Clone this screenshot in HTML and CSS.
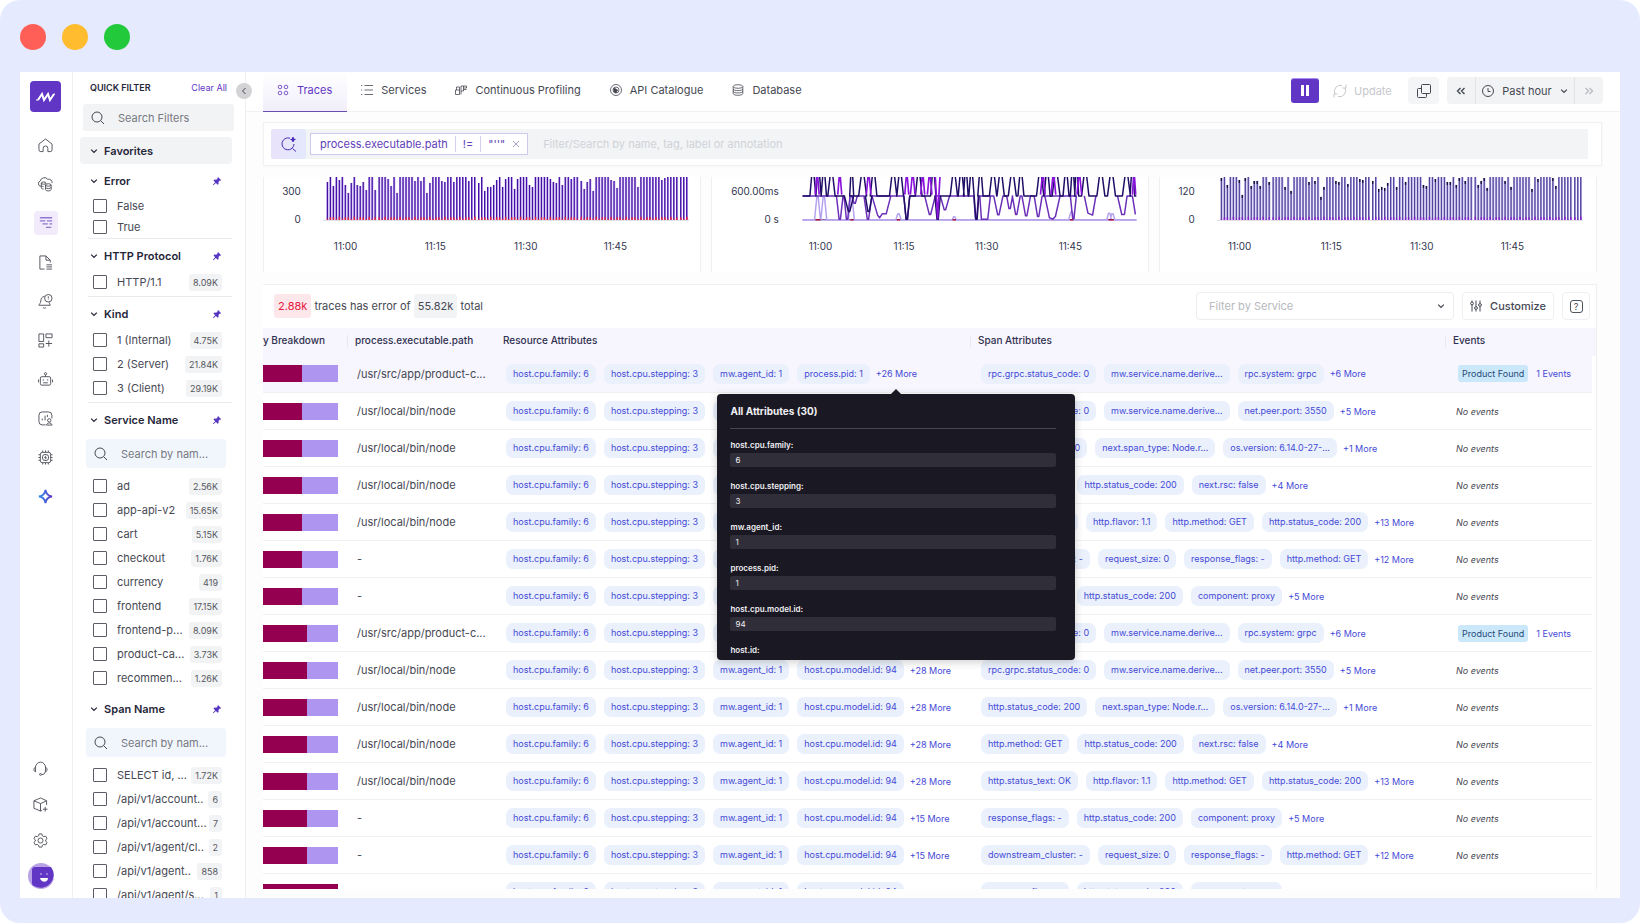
FILE: index.html
```html
<!DOCTYPE html>
<html lang="en">
<head>
    <meta charset="UTF-8">
    <meta name="viewport" content="width=device-width, initial-scale=1.0">
    <title>Traces</title>
    <link rel="stylesheet" href="styles.css">
</head>
<body>
    <!-- Shared icons -->
    <svg class="sprite" aria-hidden="true">
        <symbol id="i-chevron" viewBox="0 0 8 8"><path d="M1.200 2.600L4 5.400l2.800-2.800"/></symbol>
        <symbol id="i-search" viewBox="0 0 14 14"><circle cx="6" cy="6" r="5"/><path d="M9.600 9.600L13 13"/></symbol>
        <symbol id="i-pin" viewBox="0 0 10 10"><path d="M6 1l3.200 3.200-.9.500-.500-.1-1.300 1.500.1 1.900-.9.700L3.900 6.900 1.400 9.200l-.5-.4 2.300-2.600L1.500 4.400l.8-.8 1.900.1 1.500-1.400-.1-.700z"/></symbol>
    </svg>

    <div class="window">
        <div class="window-bar">
            <span class="dot red"></span>
            <span class="dot yellow"></span>
            <span class="dot green"></span>
        </div>

        <div class="app">
            <!-- Icon rail -->
            <nav class="rail">
                <a class="logo" href="#" aria-label="Home page">
                    <svg viewBox="0 0 31 31"><path d="M8 19l4-6 2 6 4-6 2 6 4-6"/><path class="thin" d="M6 19h2M24 13h1"/></svg>
                </a>
                <a href="#" aria-label="Home"><svg viewBox="0 0 16 16"><path d="M5.500 14.500H3a2 2 0 0 1-2-2V6.500L8 1l7 5.500v6a2 2 0 0 1-2 2h-2.500v-3.500a2.500 2.500 0 0 0-5 0z"/></svg></a>
                <a href="#" aria-label="Infrastructure"><svg viewBox="0 0 16 16"><path d="M3 10a3 3 0 0 1-.5-5.800A4.500 4.500 0 0 1 10.500 2.500 3.500 3.500 0 0 1 15 6.500"/><ellipse cx="6" cy="6.500" rx="2.500" ry="1.200"/><path d="M3.500 6.500v5c0 .8 1 1.300 2.500 1.300M3.500 9c0 .7 1 1.200 2.500 1.200"/><ellipse cx="11" cy="8.500" rx="3" ry="1.300"/><path d="M8 8.500v5c0 1.800 6 1.800 6 0v-5M8 11c0 1.800 6 1.800 6 0"/></svg></a>
                <a href="#" class="active" aria-label="Traces"><svg viewBox="0 0 16 16"><path d="M1 2h14M1 5.500h6M9 5.500h6M4 9h6M12 9h3M8 13h6"/></svg></a>
                <a href="#" aria-label="Logs"><svg viewBox="0 0 16 16"><path d="M7 15H2V1h6.500L13 5.500V8M8.500 1v4.500H13M9 10.500h6M9 12.700h6M9 15h6"/></svg></a>
                <a href="#" aria-label="Alerts"><svg viewBox="0 0 16 16"><path d="M7 2.500C4 3 3 5 3 7.500c0 2.500-2 3-2 4.500h12c0-1.500-1-2-1.300-3.200M5.500 14.500c1 .8 2 .8 3 0"/><circle cx="11" cy="4.500" r="4"/><path d="M11 2.500v2.300M11 6v.5"/></svg></a>
                <a href="#" aria-label="Dashboards"><svg viewBox="0 0 16 16"><path d="M1 1h5v8H1zM8.500 1H15v4H8.500zM1 11.500h5V15H1zM11.500 8v6.500M8.200 11.200H15"/></svg></a>
                <a href="#" aria-label="Assistant"><svg viewBox="0 0 16 16"><rect x="2.500" y="5" width="11" height="9" rx="1.500"/><path d="M8 5V3M.5 8v3M15.500 8v3M5 8.500h1.500M9.500 8.500H11M5.500 11.500h5"/><circle cx="8" cy="1.800" r="1.200"/></svg></a>
                <a href="#" aria-label="Users"><svg viewBox="0 0 16 16"><path d="M8 14.800H4.500A3.500 3.500 0 0 1 1 11.300V4.500A3.500 3.500 0 0 1 4.500 1h6.800A3.500 3.500 0 0 1 14.800 4.500V8M4.500 8v2M7.500 5v5M10 4v2.500"/><circle cx="12" cy="10" r="1.800"/><path d="M9 15c.5-3 5.500-3 6 0z"/></svg></a>
                <a href="#" aria-label="Compute"><svg viewBox="0 0 16 16"><rect x="2.500" y="2.500" width="11" height="11" rx="2"/><rect x="4.800" y="4.800" width="6.400" height="6.400" rx="2.500"/><path d="M8.500 6L7 8.200h2L7.600 10M5 .5v2M8 .5v2M11 .5v2M5 13.500v2M8 13.500v2M11 13.500v2M.5 5h2M.5 8h2M.5 11h2M13.500 5h2M13.500 8h2M13.500 11h2"/></svg></a>
                <a href="#" class="spark" aria-label="AI"><svg viewBox="0 0 16 16"><defs><linearGradient id="sparkFill" x1="0" x2="1"><stop offset="0" stop-color="#2f8df0"/><stop offset="1" stop-color="#6236c4"/></linearGradient></defs><path stroke="url(#sparkFill)" d="M8 1c.6 4.500 2.500 6.400 7 7-4.500.6-6.400 2.500-7 7-.6-4.500-2.500-6.400-7-7 4.500-.6 6.400-2.500 7-7z"/></svg></a>
                <div class="rail-bottom">
                    <a href="#" aria-label="Support"><svg viewBox="0 0 16 16"><path d="M2.500 7.500a5.500 6.300 0 0 1 11 0M2.500 7C.5 7 .5 11.500 2.800 11.500zM13.500 7c2 0 2 4.500-.3 4.500zM13 11.500c0 2-1.500 3-4 3"/><circle cx="8" cy="14.300" r="1"/></svg></a>
                    <a href="#" aria-label="Install"><svg viewBox="0 0 16 16"><path d="M14.500 8.500V4L8 1 1 4v8l7 3 1.500-.7M1 4l7 3 6.500-3M8 7v8M13 10.500v5M10.500 13h5"/></svg></a>
                    <a href="#" aria-label="Settings"><svg viewBox="0 0 16 16"><circle cx="8" cy="8" r="2.700"/><path d="M6.500 1h3l.5 2 1.500.9 2-.6L15 6l-1.500 1.300v1.400L15 10l-1.500 2.700-2-.6L10 13l-.5 2h-3L6 13l-1.500-.9-2 .6L1 10l1.500-1.300V7.300L1 6l1.500-2.700 2 .6L6 3z"/></svg></a>
                    <a class="avatar" href="#" aria-label="Account"><svg viewBox="0 0 26 26"><circle cx="13" cy="13" r="13" fill="#b9a2e6" stroke="none"/><path d="M4 7a3 3 0 0 1 3-3h16a13 13 0 0 1-17 19 3 3 0 0 1-2-3z" fill="#6236c4" stroke="none"/><path d="M12 11h2M18 11h2" stroke="#cbb9f3"/><path d="M12 15h8c0 5-7 5-8 0z" fill="#fff" stroke="none"/></svg></a>
                </div>
            </nav>

            <!-- Quick filters -->
            <aside class="filters">
                <button class="collapse" type="button" aria-label="Collapse filters"><svg viewBox="0 0 8 8"><path d="M5.500 1l-3 3 3 3"/></svg></button>
                <div class="filters-head">
                    <h2>QUICK FILTER</h2>
                    <a href="#">Clear All</a>
                </div>
                <label class="search-main">
                    <svg class="icon-search"><use href="#i-search"/></svg>
                    <input type="text" placeholder="Search Filters" aria-label="Search Filters">
                </label>
                <h3 class="favorites"><svg class="chevron"><use href="#i-chevron"/></svg>Favorites</h3>
                <div id="filter-groups"></div>
            </aside>

            <main class="main">
                <header class="topbar">
                    <nav class="tabs">
                        <a class="tab active" href="#"><svg viewBox="0 0 12 12"><circle cx="3" cy="3" r="1.800"/><circle cx="9" cy="3" r="1.800"/><circle cx="3" cy="9" r="1.800"/><circle cx="9" cy="9" r="1.800"/></svg>Traces</a>
                        <a class="tab" href="#"><svg viewBox="0 0 12 12"><path d="M3.500 1.500H12M3.500 6H12M3.500 10.500H12M0 1.500h1.200M0 6h1.200M0 10.500h1.200"/></svg>Services</a>
                        <a class="tab" href="#"><svg viewBox="0 0 12 12"><path d="M.5 6h4v4.500h-4zM1.500 6V3h3v3M6 10.500V2h2.500v5H6M8.500 2h3v2h-3M8.500 5.500h3"/></svg>Continuous Profiling</a>
                        <a class="tab" href="#"><svg viewBox="0 0 12 12"><circle cx="6" cy="6" r="5.500"/><circle cx="6" cy="6" r="3"/><path d="M4 4l3.500 2-1.500 3C4 8.500 3.500 6 4 4z" fill="#3d3f49"/></svg>API Catalogue</a>
                        <a class="tab" href="#"><svg viewBox="0 0 12 12"><ellipse cx="6" cy="2.500" rx="4.800" ry="1.800"/><path d="M1.200 2.500v7c0 2.400 9.600 2.400 9.600 0v-7M1.200 5c0 2.200 9.600 2.200 9.600 0M1.200 7.300c0 2.200 9.600 2.200 9.600 0"/></svg>Database</a>
                    </nav>
                    <div class="actions">
                        <button class="pause" type="button" aria-label="Pause"></button>
                        <button class="update" type="button" disabled><svg viewBox="0 0 14 14"><path d="M2 10A6 6 0 0 1 9 1.500M12 4a6 6 0 0 1-7 8.500M9.500 4H13V.5M4.500 10H1v3.500"/></svg>Update</button>
                        <button class="copy" type="button" aria-label="Duplicate"><svg viewBox="0 0 14 14"><rect x="4.500" y=".5" width="9" height="9" rx="1"/><path d="M4 4.500H1.500a1 1 0 0 0-1 1v7a1 1 0 0 0 1 1h7a1 1 0 0 0 1-1V10"/></svg></button>
                        <div class="time">
                            <button type="button" aria-label="Back"><svg class="arrows" viewBox="0 0 10 8"><path d="M4.500 1l-3 3 3 3M8.500 1l-3 3 3 3"/></svg></button>
                            <button class="range" type="button"><svg class="clock" viewBox="0 0 12 12"><circle cx="6" cy="6" r="5.500"/><path d="M6 3v3.500h2.500"/></svg>Past hour<svg class="chevron"><use href="#i-chevron"/></svg></button>
                            <button type="button" aria-label="Forward" disabled><svg class="arrows" viewBox="0 0 10 8"><path d="M1.500 1l3 3-3 3M5.500 1l3 3-3 3"/></svg></button>
                        </div>
                    </div>
                </header>

                <div class="content">
                    <div class="query">
                        <div class="query-bar">
                            <span class="query-icon"><svg viewBox="0 0 16 16"><path d="M9 2.200A6 6 0 1 0 13 8M11.500 12.500L15 15.500M12 1v5M9.500 3.500h5"/><path d="M12 1.500l.7 1.400 1.400.6-1.400.6L12 5.600l-.7-1.500-1.400-.6 1.400-.6z" fill="#4a2bb5"/></svg></span>
                            <div class="chip">
                                <span>process.executable.path</span>
                                <span>!=</span>
                                <span>"''"<button type="button" aria-label="Remove"><svg viewBox="0 0 8 8"><path d="M1 1l6 6M7 1L1 7"/></svg></button></span>
                            </div>
                            <input type="text" placeholder="Filter/Search by name, tag, label or annotation" aria-label="Filter">
                        </div>
                    </div>

                    <div class="charts">
                        <svg class="chart" id="chart-requests" viewBox="0 11 438 95"></svg>
                        <svg class="chart" id="chart-latency" viewBox="0 11 438 95"></svg>
                        <svg class="chart" id="chart-errors" viewBox="0 11 438 95"></svg>
                    </div>

                    <section class="traces">
                        <div class="traces-head">
                            <p><mark class="bad">2.88k</mark> traces has error of <mark>55.82k</mark> total</p>
                            <div class="select">
                                <select aria-label="Filter by Service"><option>Filter by Service</option></select>
                                <svg class="chevron"><use href="#i-chevron"/></svg>
                            </div>
                            <button class="customize" type="button"><svg viewBox="0 0 12 12"><path d="M2 .5v1.500M2 5v6.500M6 .5v6M6 9.500v2M10 .5v3M10 6.500v5"/><circle cx="2" cy="3.500" r="1.400"/><circle cx="6" cy="8" r="1.400"/><circle cx="10" cy="5" r="1.400"/></svg>Customize</button>
                            <button class="help" type="button" aria-label="Help"><span>?</span></button>
                        </div>
                        <table>
                            <colgroup>
                                <col class="col-latency"><col class="col-path"><col class="col-attrs"><col class="col-attrs"><col>
                            </colgroup>
                            <thead>
                                <tr>
                                    <th><div class="clip">Latency Breakdown</div></th>
                                    <th class="split">process.executable.path</th>
                                    <th>Resource Attributes</th>
                                    <th class="split">Span Attributes</th>
                                    <th class="split">Events</th>
                                </tr>
                            </thead>
                            <tbody id="trace-rows"></tbody>
                        </table>
                    </section>
                </div>
            </main>
        </div>
    </div>
    <script src="script.js"></script>
</body>
</html>
```

FILE: styles.css
```css
* {
    box-sizing: border-box;
}

body {
    margin: 0;
    font-family: Inter, "Liberation Sans", sans-serif;
    font-size: 11px;
    color: #464853;
    background: #fff;
}

h2, h3, p {
    margin: 0;
}

a {
    color: inherit;
    text-decoration: none;
}

button, input, select {
    font: inherit;
    color: inherit;
    border: 0;
    background: none;
    padding: 0;
}

svg {
    display: block;
    fill: none;
    stroke: currentColor;
}

.sprite {
    position: absolute;
    width: 0;
    height: 0;
}

/* Window frame */
.window {
    display: flex;
    flex-direction: column;
    height: 100vh;
    padding: 0 20px 25px;
    background: #e5eaff;
    border-radius: 20px;
}

.window-bar {
    display: flex;
    align-items: center;
    gap: 16px;
    height: 72px;
    padding-top: 2px;
    flex: none;
}

.dot {
    width: 26px;
    height: 26px;
    border-radius: 50%;
}

.red { background: #ff5f57; }
.yellow { background: #febc2e; }
.green { background: #22c93a; }

.app {
    display: flex;
    flex: 1;
    min-height: 0;
    overflow: hidden;
    background: #fff;
}

/* Icon rail */
.rail {
    display: flex;
    flex-direction: column;
    align-items: center;
    gap: 15px;
    flex: none;
    width: 53px;
    padding: 9px 1px 10px 0;
    border-right: 1px solid #f0f0f3;
}

.rail a {
    display: flex;
    align-items: center;
    justify-content: center;
    flex: none;
    width: 24px;
    height: 24px;
    border-radius: 4px;
    color: #50525c;
}

.rail svg {
    width: 15px;
    height: 15px;
}

.rail a.logo {
    width: 31px;
    height: 31px;
    margin-bottom: 6px;
    background: #6236c4;
    color: #fff;
}

.logo svg {
    width: 31px;
    height: 31px;
    stroke-width: 2;
}

.logo .thin {
    stroke-width: 1;
}

.rail a.active {
    background: #f1ebfb;
    color: #8f78cf;
}

.rail a.active svg {
    width: 14px;
    height: 14px;
    stroke-width: 1.5;
}

.rail a.spark svg {
    stroke-width: 2;
}

.rail-bottom {
    display: flex;
    flex-direction: column;
    align-items: center;
    gap: 12px;
    margin: auto 10px 0 0;
}

.rail .avatar svg {
    width: 26px;
    height: 26px;
    flex: none;
}

/* Quick filters */
.filters {
    position: relative;
    flex: none;
    width: 173px;
    border-right: 1px solid #f0f0f3;
}

.filters-head {
    display: flex;
    align-items: center;
    justify-content: space-between;
    height: 30px;
    margin-bottom: 2px;
    padding: 0 18px 0 17px;
}

.filters-head h2 {
    font-size: 9px;
    font-weight: 600;
    color: #26263a;
}

.filters-head a {
    font-size: 9px;
    color: #6236c4;
}

.collapse {
    position: absolute;
    top: 11px;
    right: -7px;
    display: flex;
    align-items: center;
    justify-content: center;
    width: 16px;
    height: 16px;
    border-radius: 50%;
    background: #d3d3d6;
    z-index: 2;
}

.collapse svg {
    width: 8px;
    height: 8px;
}

.icon-search {
    width: 14px;
    height: 14px;
    flex: none;
}

.chevron {
    width: 8px;
    height: 8px;
    flex: none;
    stroke-width: 1.3;
}

.search-main, .search-group {
    display: flex;
    align-items: center;
    border-radius: 3px;
}

.search-main {
    gap: 13px;
    height: 27px;
    margin: 0 11px 6px 10px;
    padding: 0 8px;
    background: #f2f3f5;
}

.search-main input, .search-group input {
    flex: 1;
    min-width: 0;
    outline: none;
}

.filters input::placeholder {
    color: #777981;
}

.favorites, .group-head {
    display: flex;
    align-items: center;
    gap: 6px;
    font-size: 11px;
    font-weight: 600;
    color: #26263a;
}

.favorites {
    height: 27px;
    margin: 0 13px 0 7px;
    padding-left: 10px;
    border-radius: 4px;
    background: #f2f3f5;
}

.group {
    margin: 0 13px 0 15px;
    padding: 5px 0 2px;
}

.group.compact {
    padding-bottom: 1px;
}

.group.line {
    border-bottom: 1px solid #ebebef;
}

.group-head {
    height: 24px;
    margin-bottom: 2px;
    padding: 0 10px 0 2px;
}

.group-head .pin {
    width: 10px;
    height: 10px;
    margin-left: auto;
    fill: #5636c0;
    stroke: none;
}

.search-group {
    gap: 13px;
    height: 29px;
    margin: 7px 6px 6px -2px;
    padding: 0 8px;
    background: #f1f6fd;
}

.option {
    display: flex;
    align-items: center;
    height: 24px;
    padding: 0 10px 0 5px;
    white-space: nowrap;
}

.compact .option {
    height: 21px;
}

.option input {
    appearance: none;
    width: 14px;
    height: 14px;
    margin: 0 10px 0 0;
    border: 1px solid #5a5c66;
    border-radius: 1px;
}

.option .count {
    margin-left: auto;
    padding: 0 4px;
    border-radius: 3px;
    background: #f2f3f4;
    font-size: 9px;
    line-height: 17px;
    color: #55575f;
}

/* Top bar */
.main {
    display: flex;
    flex-direction: column;
    flex: 1;
    min-width: 0;
}

.topbar {
    display: flex;
    justify-content: space-between;
    flex: none;
    height: 40px;
    padding: 0 17px;
    border-bottom: 1px solid #f2f2f4;
}

.tabs {
    display: flex;
}

.tab {
    display: flex;
    align-items: center;
    gap: 8px;
    height: 40px;
    padding: 0 15px 4px 14px;
}

.tab svg {
    width: 12px;
    height: 12px;
    stroke-width: 0.8;
}

.tab.active {
    color: #6236c4;
    border-bottom: 1px solid #6a4fb0;
    background: linear-gradient(#fff, #f1eefb);
    padding-bottom: 3px;
}

.actions {
    display: flex;
    align-items: center;
    gap: 8px;
    padding-bottom: 2px;
}

.pause {
    width: 28px;
    height: 25px;
    border-radius: 3px;
    border-top: 1px solid #a98cf0;
    background:
        linear-gradient(#fff, #fff) 10px 6px / 3px 11px no-repeat,
        linear-gradient(#fff, #fff) 15px 6px / 3px 11px no-repeat,
        #6236c4;
}

.update {
    display: flex;
    align-items: center;
    gap: 7px;
    width: 73px;
    height: 27px;
    padding: 0 6px;
    color: #c5c7cc;
}

.update svg, .copy svg {
    width: 14px;
    height: 14px;
}

.copy {
    display: flex;
    align-items: center;
    justify-content: center;
    width: 31px;
    height: 27px;
    border-radius: 4px;
    background: #f4f5f6;
}

.time {
    display: flex;
    height: 27px;
    border-radius: 4px;
    background: #f2f3f5;
}

.time button {
    display: flex;
    align-items: center;
    justify-content: center;
    width: 28px;
}

.time button.range {
    gap: 8px;
    width: 100px;
    border: solid #e2e3e6;
    border-width: 0 1px;
}

.time button:disabled {
    color: #b9bbc1;
}

.arrows {
    width: 10px;
    height: 8px;
    stroke-width: 1.4;
}

.clock {
    width: 12px;
    height: 12px;
}

/* Query bar */
.content {
    display: flex;
    flex-direction: column;
    flex: 1;
    min-height: 0;
    padding: 10px 23px 9px 17px;
    background: #fdfdfd;
}

.query {
    flex: none;
    height: 44px;
    margin-right: -5px;
    padding: 6px 13px 6px 7px;
    border: 1px solid #f1f1f3;
    background: #fff;
    box-shadow: 0 1px 4px rgba(0, 0, 0, 0.03);
}

.query-bar {
    display: flex;
    align-items: center;
    height: 30px;
    background: #f2f4f6;
}

.query-icon {
    display: flex;
    align-items: center;
    justify-content: center;
    width: 35px;
    height: 30px;
    border-radius: 3px;
    background: linear-gradient(90deg, #e9e2fa, #e3e9fd);
    color: #4a2bb5;
}

.query-icon svg {
    width: 16px;
    height: 16px;
}

.chip {
    display: flex;
    align-items: center;
    height: 22px;
    margin: 0 15px 0 4px;
    padding-left: 2px;
    border: 1px solid #cfc8ee;
    background: #fff;
    color: #6040b8;
}

.chip span {
    display: flex;
    align-items: center;
    gap: 7px;
    height: 16px;
    padding: 0 7px;
}

.chip span + span {
    border-left: 1px solid #d5cdf0;
}

.chip button svg {
    width: 8px;
    height: 8px;
    color: #a8a0c8;
}

.query-bar input {
    flex: 1;
    outline: none;
}

.query-bar input::placeholder {
    color: #d0d3d7;
}

/* Charts */
.charts {
    display: grid;
    grid-template-columns: repeat(3, 1fr);
    gap: 10px;
    flex: none;
    margin: 11px 0 12px;
}

.chart {
    width: 100%;
    background: #fff;
    border: solid #f0f0f3;
    border-width: 0 1px;
}

.chart text {
    font-size: 10px;
    fill: #33364f;
    stroke: none;
}

.chart rect {
    stroke: none;
}

/* Traces table */
.traces {
    flex: 1;
    min-height: 0;
    overflow: hidden;
    border: solid #efeff2;
    border-width: 1px 1px 0 0;
    background: #fff;
}

.traces-head {
    display: flex;
    align-items: center;
    gap: 8px;
    height: 43px;
    padding: 0 6px 0 11px;
}

.traces-head p {
    margin-right: auto;
}

mark {
    display: inline-block;
    padding: 0 4px;
    border-radius: 3px;
    line-height: 24px;
    background: #f2f3f4;
    color: inherit;
}

mark.bad {
    background: #fde7ea;
    color: #e4173c;
}

.select {
    display: flex;
    align-items: center;
    width: 258px;
    height: 28px;
    padding-right: 8px;
    border: 1px solid #ededf0;
    border-radius: 4px;
}

.select select {
    appearance: none;
    flex: 1;
    padding-left: 12px;
    color: #b6b8bd;
}

.customize, .help {
    display: flex;
    align-items: center;
    justify-content: center;
    height: 28px;
    border: 1px solid #f0f0f3;
    border-radius: 4px;
}

.customize {
    gap: 8px;
    width: 92px;
    font-weight: 500;
}

.customize svg {
    width: 12px;
    height: 12px;
}

.help {
    width: 28px;
}

.help span {
    width: 13px;
    border: 1px solid #50525c;
    border-radius: 3px;
    font-size: 9px;
    line-height: 11px;
}

table {
    width: calc(100% - 4px);
    table-layout: fixed;
    border-collapse: collapse;
}

.col-latency { width: 84px; }
.col-path { width: 148px; }
.col-attrs { width: 475px; }

th, td {
    padding: 0 0 0 8px;
    text-align: left;
    white-space: nowrap;
}

th {
    height: 28px;
    padding-bottom: 3px;
    background: #f7f5fd;
    font-size: 10px;
    font-weight: 500;
    color: #2f3150;
}

th.split {
    background: linear-gradient(#e9e7f1, #e9e7f1) 0 7px / 1px 13px no-repeat #f7f5fd;
}

th:last-child {
    box-shadow: 4px 0 #f7f5fd;
}

th:first-child, td:first-child {
    padding-left: 0;
}

.clip {
    display: flex;
    justify-content: flex-end;
    width: 62px;
    overflow: hidden;
}

td {
    height: 37px;
    border-bottom: 1px solid #f1f1f4;
}

td:nth-child(2) {
    padding-left: 10px;
}

td:nth-child(3), td:nth-child(4), td:nth-child(5) {
    padding-left: 11px;
}

td:nth-child(5) {
    font-size: 9px;
}

tr.hover td {
    background: #f7f5fd;
}

.latency {
    display: flex;
    width: 75px;
    height: 17px;
    background: #ae95f0;
}

.latency span {
    background: #94004f;
}

.attrs {
    display: flex;
    align-items: center;
    gap: 8px;
    font-size: 9px;
    color: #4549d6;
}

.attr {
    padding: 0 7px;
    border-radius: 7px;
    background: #eaf1fc;
    line-height: 20px;
}

.event {
    margin-left: 2px;
    padding: 0 4px;
    border-radius: 3px;
    background: #cbe8fb;
    color: #274a78;
    line-height: 17px;
}

.more {
    position: relative;
    margin-left: -2px;
}

/* Attribute tooltip */
.tooltip {
    position: absolute;
    top: 26px;
    left: 50%;
    width: 358px;
    height: 266px;
    margin-left: -179px;
    padding: 0 19px 0 13px;
    border-radius: 4px;
    background: #1a1822;
    color: #f0f0f4;
    box-shadow: 0 2px 8px rgba(0, 0, 0, 0.2);
    font-size: 8px;
    z-index: 3;
}

.tooltip::before {
    content: "";
    position: absolute;
    top: -5px;
    left: 173px;
    border: 6px solid transparent;
    border-top: 0;
    border-bottom-color: #1a1822;
}

.tooltip-body {
    height: 266px;
    overflow: hidden;
}

.tooltip h4 {
    margin: 0 0 10px;
    font-size: 10px;
    font-weight: 700;
    line-height: 34px;
    border-bottom: 1px solid #47454f;
}

.tooltip dl, .tooltip dd {
    margin: 0;
}

.tooltip dt {
    font-weight: 600;
    line-height: 12px;
    margin-bottom: 2px;
}

.tooltip dd {
    margin-bottom: 13px;
    padding-left: 5px;
    border-radius: 2px;
    background: #302e39;
    line-height: 14px;
}
```

FILE: script.js
```js
const groups = [
    { name: 'Error', line: true, compact: true, options: [['False'], ['True']] },
    { name: 'HTTP Protocol', line: true, options: [['HTTP/1.1', '8.09K']] },
    { name: 'Kind', line: true, options: [['1 (Internal)', '4.75K'], ['2 (Server)', '21.84K'], ['3 (Client)', '29.19K']] },
    {
        name: 'Service Name', search: true, options: [
            ['ad', '2.56K'], ['app-api-v2', '15.65K'], ['cart', '5.15K'], ['checkout', '1.76K'], ['currency', '419'],
            ['frontend', '17.15K'], ['frontend-p...', '8.09K'], ['product-ca...', '3.73K'], ['recommen...', '1.26K']
        ]
    },
    {
        name: 'Span Name', search: true, options: [
            ['SELECT id, ...', '1.72K'], ['/api/v1/account..', '6'], ['/api/v1/account...', '7'],
            ['/api/v1/agent/cl..', '2'], ['/api/v1/agent..', '858'], ['/api/v1/agent/s...', '1']
        ]
    }
];

document.getElementById('filter-groups').innerHTML = groups.map(group => `
    <section class="group ${group.line ? 'line' : ''} ${group.compact ? 'compact' : ''}">
        <h3 class="group-head"><svg class="chevron"><use href="#i-chevron"/></svg>${group.name}<svg class="pin"><use href="#i-pin"/></svg></h3>
        ${group.search ? `<label class="search-group"><svg class="icon-search"><use href="#i-search"/></svg><input type="text" placeholder="Search by nam..." aria-label="Search ${group.name}"></label>` : ''}
        ${group.options.map(([label, count]) => `
            <label class="option"><input type="checkbox">${label}${count ? `<span class="count">${count}</span>` : ''}</label>
        `).join('')}
    </section>
`).join('');

// Table rows
const spans = {
    grpc: [['rpc.grpc.status_code: 0', 'mw.service.name.derive...', 'rpc.system: grpc'], 6],
    peer: [['rpc.grpc.status_code: 0', 'mw.service.name.derive...', 'net.peer.port: 3550'], 5],
    next: [['http.status_code: 200', 'next.span_type: Node.r...', 'os.version: 6.14.0-27-...'], 1],
    rsc: [['http.method: GET', 'http.status_code: 200', 'next.rsc: false'], 4],
    http: [['http.status_text: OK', 'http.flavor: 1.1', 'http.method: GET', 'http.status_code: 200'], 13],
    cluster: [['downstream_cluster: -', 'request_size: 0', 'response_flags: -', 'http.method: GET'], 12],
    proxy: [['response_flags: -', 'http.status_code: 200', 'component: proxy'], 5]
};

const product = '/usr/src/app/product-c...';
const node = '/usr/local/bin/node';

const rows = [
    { path: product, last: 'process.pid: 1', more: 26, span: 'grpc', event: true, open: true },
    { path: node, more: 28, span: 'peer' },
    { path: node, more: 28, span: 'next' },
    { path: node, more: 28, span: 'rsc' },
    { path: node, more: 28, span: 'http' },
    { path: '-', more: 15, span: 'cluster' },
    { path: '-', more: 15, span: 'proxy' },
    { path: product, more: 26, span: 'grpc', event: true },
    { path: node, more: 28, span: 'peer' },
    { path: node, more: 28, span: 'next' },
    { path: node, more: 28, span: 'rsc' },
    { path: node, more: 28, span: 'http' },
    { path: '-', more: 15, span: 'proxy' },
    { path: '-', more: 15, span: 'cluster' },
    { path: '-', more: 15, span: 'proxy', full: true }
];

const tooltip = `
    <div class="tooltip" role="tooltip"><div class="tooltip-body">
        <h4>All Attributes (30)</h4>
        <dl>
            <dt>host.cpu.family:</dt><dd>6</dd>
            <dt>host.cpu.stepping:</dt><dd>3</dd>
            <dt>mw.agent_id:</dt><dd>1</dd>
            <dt>process.pid:</dt><dd>1</dd>
            <dt>host.cpu.model.id:</dt><dd>94</dd>
            <dt>host.id:</dt>
        </dl>
    </div></div>`;

function attrs(list, more, extra = '') {
    return `<div class="attrs">${list.map(a => `<span class="attr">${a}</span>`).join('')}<span class="more">+${more} More${extra}</span></div>`;
}

document.getElementById('trace-rows').innerHTML = rows.map((row, i) => {
    const resource = ['host.cpu.family: 6', 'host.cpu.stepping: 3', 'mw.agent_id: 1', row.last || 'host.cpu.model.id: 94'];
    const split = row.full ? 100 : i < 7 ? 52 : 59;
    return `
        <tr class="${row.open ? 'hover' : ''}">
            <td><div class="latency"><span style="width: ${split}%"></span></div></td>
            <td>${row.path}</td>
            <td>${attrs(resource, row.more, row.open ? tooltip : '')}</td>
            <td>${attrs(...spans[row.span])}</td>
            <td>${row.event ? '<div class="attrs"><span class="event">Product Found</span><span>1 Events</span></div>' : '<em>No events</em>'}</td>
        </tr>`;
}).join('');

// Charts, the upper part is scrolled under the query bar
const TOP = 11;
const ZERO = 54;

function labels(y, x, right) {
    return y.map((t, i) => `<text x="${right}" y="${i ? 57 : 29}" text-anchor="end">${t}</text>`).join('') +
        x.map((cx, i) => `<text x="${cx}" y="84" text-anchor="middle">11:${['00', '15', '30', '45'][i]}</text>`).join('');
}

function bars(heights, left, main, light, tip, foot) {
    let out = `<path d="M${left - 4} ${ZERO + .5}H${left + 364}" stroke="#d9d9e0"/>`;
    heights.forEach((h, i) => {
        const x = left + Math.round(i * 3.03);
        const f = 1 + (i * 7 + i * i) % 5 / 2;
        out += `<rect x="${x}" y="${ZERO - h}" width="2" height="${h}" fill="${light}"/>`;
        out += `<rect x="${x}" y="${ZERO - h}" width="1.3" height="${h}" fill="${main}"/>`;
        if (h < 43 && tip) out += `<rect x="${x}" y="${ZERO - h}" width="1.3" height="3" fill="${tip}"/>`;
        out += `<rect x="${x}" y="${ZERO - f}" width="1.5" height="${f}" fill="${foot}"/>`;
    });
    return out;
}

const requests = [38,43,34,43,40,43,35,27,37,43,35,34,38,30,43,43,30,43,43,43,41,34,43,27,43,43,43,43,43,39,43,39,43,27,37,43,43,43,39,38,43,43,38,43,43,43,43,39,43,43,37,43,29,33,33,35,40,43,33,41,43,43,31,41,43,43,43,35,33,43,43,43,43,43,41,38,37,43,35,43,43,41,43,43,39,31,38,41,29,43,43,43,43,43,40,39,32,43,43,43,43,43,43,33,43,43,43,43,43,43,43,40,42,43,43,43,43,43,43,43];
const errors = [42,43,35,43,43,43,40,25,42,43,34,39,39,34,43,43,38,43,43,43,43,33,43,29,43,43,43,43,43,38,43,39,43,23,33,43,43,43,39,38,43,43,36,43,43,43,41,40,43,43,39,43,31,33,32,37,43,43,33,43,43,38,43,43,43,43,43,35,34,43,43,41,43,43,43,38,38,43,35,42,43,39,43,43,43,35,39,42,32,43,43,43,43,43,39,43,33,43,43,43,43,43,43,31,43,41,43,43,43,43,42,34,43,43,43,43,43,43,43,43];

document.getElementById('chart-requests').innerHTML =
    labels(['300', '0'], [82, 172, 263, 353], 37) +
    bars(requests, 63, '#4310a4', '#cdb8f8', '', '#e8203c');

document.getElementById('chart-errors').innerHTML =
    labels(['120', '0'], [80, 172, 263, 354], 35) +
    bars(errors, 61, '#53459a', '#c6bdf6', '#151030', '#8a1bd0');

// Each spike leaves the base line at x - w and comes back at x + w
function spikes(base, points, from, to) {
    return `M${from} ${base}` + points.map(([x, y, w]) => `L${x - w} ${base}L${x - 2} ${y}L${x + 2} ${y}L${x + w} ${base}`).join('') + `L${to} ${base}`;
}

const dark = [[337,330,9],[354,330,8],[370,330,8],[393,330,11],[446,455,14],[454,330,6],[487,330,12],[505,455,10],[520,330,10],[579,330,11],[600,330,10],[620,478,9],[656,330,10],[700,330,8],[713,478,8],[762,330,11],[784,330,9],[798,330,7],[815,330,8],[830,478,7],[842,330,8],[880,330,11],[903,330,11],[938,330,12],[964,330,9],[1022,330,11],[1043,330,9],[1070,330,12],[1100,330,9],[1120,330,7],[1132,330,6],[1158,330,11],[1205,330,12],[1237,330,12],[1282,330,12],[1300,330,7]];
const pink = [[350,330,6],[418,330,6],[505,330,7],[620,330,6],[638,330,7],[668,330,6],[689,330,7],[713,475,7],[1030,330,7],[1062,330,7],[1140,330,7],[1305,330,5]];
const dips = [[418,478,10],[440,478,9],[463,430,8],[503,478,12],[620,478,9],[690,464,16],[735,450,14],[829,476,7],[896,465,14],[930,446,9],[950,464,12],[980,468,13],[1016,470,12],[1122,476,9]];

document.getElementById('chart-latency').innerHTML =
    labels(['600.00ms', '0 s'], [109, 193, 276, 360], 67) + `
    <svg x="0" y="${TOP}" width="438" height="95" viewBox="33 351 1314 285" stroke-width="4.500" stroke-linejoin="round">
        <path d="M306 480H1312" stroke="#8f6fc4"/>
        <path d="${spikes(480, [[351,410,9],[370,410,9],[453,410,9],[595,462,8],[763,471,6],[1117,455,9],[1230,460,7],[1240,462,7]], 306, 1312)}" stroke="#b5a3ef"/>
        <path d="M345 480h15M450 480h10M590 480h10M758 480h10M1112 480h10M1228 480h16" stroke="#a5123f"/>
        <path d="${spikes(408, dips, 306, 1040)}" stroke="#6b2fb8"/>
        <path d="M515 408L532 466L538 474L546 462L558 462L572 408M840 408L845 478H864L872 408M1036 408L1050 474L1060 478L1068 470L1082 408M1155 408L1166 460L1180 466L1190 408M1255 408L1268 464H1276L1284 408H1300L1309 464" stroke="#6b2fb8"/>
        <path d="${spikes(408, dark, 306, 1312)}" stroke="#1f0d66"/>
        <path d="${pink.map(([x, y, w]) => `M${x - w} ${y > 408 ? 351 : 404}L${x} ${y}L${x + w} ${y > 408 ? 351 : 404}`).join('')}" stroke="#8a14dc" stroke-width="5"/>
    </svg>`;
```
